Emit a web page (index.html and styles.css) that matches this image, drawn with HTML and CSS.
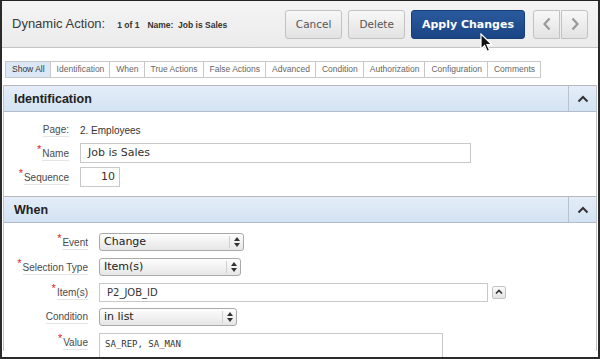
FILE: index.html
```html
<!DOCTYPE html>
<html lang="en">
<head>
  <meta charset="UTF-8">
  <title>Dynamic Action</title>
  <link rel="stylesheet" href="styles.css">
</head>
<body>

<div class="frame">
  <div class="topbar">
    <div class="title">
      <span class="title-main">Dynamic Action:</span>
      <span class="title-info">1 of 1</span>
      <span class="title-info">Name:&nbsp; Job is Sales</span>
    </div>
    <div class="actions">
      <button class="btn">Cancel</button>
      <button class="btn">Delete</button>
      <button class="btn btn-hot">Apply Changes</button>
      <div class="pager">
        <button class="btn btn-icon">
          <svg width="10" height="14" viewBox="0 0 10 14"><path d="M7.5 1.5 2.5 7l5 5.5" fill="none" stroke="#999" stroke-width="2.2"/></svg>
        </button>
        <button class="btn btn-icon">
          <svg width="10" height="14" viewBox="0 0 10 14"><path d="M2.5 1.5 7.5 7l-5 5.5" fill="none" stroke="#999" stroke-width="2.2"/></svg>
        </button>
      </div>
    </div>
  </div>

  <div class="content">
    <ul class="tabs">
      <li class="active">Show All</li>
      <li>Identification</li>
      <li>When</li>
      <li>True Actions</li>
      <li>False Actions</li>
      <li>Advanced</li>
      <li>Condition</li>
      <li>Authorization</li>
      <li>Configuration</li>
      <li>Comments</li>
    </ul>

    <div class="region">
      <div class="region-head">
        <h3>Identification</h3>
        <span class="collapse">
          <svg width="12" height="8" viewBox="0 0 12 8"><path d="M1.5 6.5 6 2l4.5 4.5" fill="none" stroke="#333" stroke-width="2"/></svg>
        </span>
      </div>
      <div class="region-body ident">
        <div class="label plain"><span>Page:</span></div>
        <div class="value">2. Employees</div>

        <div class="label"><i>*</i><span>Name</span></div>
        <div class="field"><div class="text name-input">Job is Sales</div></div>

        <div class="label"><i>*</i><span>Sequence</span></div>
        <div class="field"><div class="text seq-input">10</div></div>
      </div>
    </div>

    <div class="region">
      <div class="region-head">
        <h3>When</h3>
        <span class="collapse">
          <svg width="12" height="8" viewBox="0 0 12 8"><path d="M1.5 6.5 6 2l4.5 4.5" fill="none" stroke="#333" stroke-width="2"/></svg>
        </span>
      </div>
      <div class="region-body when">
        <div class="label"><i>*</i><span>Event</span></div>
        <div class="field"><div class="select event-sel">Change<span class="arrows"></span></div></div>

        <div class="label"><i>*</i><span>Selection Type</span></div>
        <div class="field"><div class="select type-sel">Item(s)<span class="arrows"></span></div></div>

        <div class="label"><i>*</i><span>Item(s)</span></div>
        <div class="field">
          <div class="text item-input">P2_JOB_ID</div>
          <span class="mini-btn">
            <svg width="8" height="6" viewBox="0 0 8 6"><path d="M1 4.5 4 1.5l3 3" fill="none" stroke="#333" stroke-width="1.6"/></svg>
          </span>
        </div>

        <div class="label plain"><span>Condition</span></div>
        <div class="field"><div class="select cond-sel">in list<span class="arrows"></span></div></div>

        <div class="label"><i>*</i><span>Value</span></div>
        <div class="field field-top"><div class="textarea">SA_REP, SA_MAN</div></div>
      </div>
    </div>
  </div>

  <svg class="cursor" width="14" height="20" viewBox="0 0 14 20">
    <path d="M1 1v15l3.6-3.4 2.6 5.8 2.4-1.1-2.6-5.6H12z" fill="#111" stroke="#fff" stroke-width="1.2"/>
  </svg>
</div>

</body>
</html>
```

FILE: styles.css
```css
* {
  box-sizing: border-box;
}

body {
  margin: 0;
  font-family: "Liberation Sans", Arial, sans-serif;
  background: #fff;
}

.frame {
  position: relative;
  width: 600px;
  height: 359px;
  overflow: hidden;
  border-top: 1px solid #222;
  border-left: 2px solid #2a2a2a;
  border-right: 2px solid #2a2a2a;
  border-bottom: 2px solid #2a2a2a;
  background: #fff;
}

/* top bar */
.topbar {
  height: 47px;
  display: flex;
  align-items: center;
  justify-content: space-between;
  padding: 0 10px 0 10px;
  background: linear-gradient(#f4f4f4, #ebebeb);
  border-bottom: 1px solid #c4c4c4;
}

.title {
  display: flex;
  align-items: baseline;
  gap: 8px;
  margin-top: -2px;
}

.title-main {
  font-size: 13px;
  color: #3a3a3a;
  margin-right: 4px;
}

.title-info {
  font-size: 8.5px;
  font-weight: bold;
  color: #333;
}

.actions {
  display: flex;
  align-items: center;
  gap: 6px;
}

.btn {
  height: 29px;
  padding: 0 10px;
  font-family: "DejaVu Sans", sans-serif;
  font-size: 10.5px;
  color: #555;
  background: linear-gradient(#f8f8f8, #e2e2e2);
  border: 1px solid #c2c2c2;
  border-radius: 3px;
}

.btn-hot {
  padding: 0 10px;
  font-weight: bold;
  font-size: 11px;
  color: #fff;
  background: linear-gradient(#2a5a9e, #1a4585);
  border-color: #163d75;
}

.pager {
  display: flex;
  gap: 1px;
  margin-left: 2px;
}

.btn-icon {
  width: 27px;
  padding: 0;
  display: flex;
  align-items: center;
  justify-content: center;
}

.btn-icon:first-child {
  border-radius: 3px 0 0 3px;
}

.btn-icon:last-child {
  border-radius: 0 3px 3px 0;
}

/* content */
.content {
  padding-top: 13px;
}

.tabs {
  list-style: none;
  margin: 0 0 7px 3px;
  padding: 0;
  display: flex;
}

.tabs li {
  height: 17px;
  line-height: 15px;
  padding: 0 5px 0 6px;
  font-size: 8.5px;
  color: #666;
  border: 1px solid #c8c8c8;
  border-left: none;
  background: #fff;
}

.tabs li:first-child {
  border-left: 1px solid #c8c8c8;
}

.tabs li.active {
  background: #dbe7f4;
  color: #333;
}

.region {
  border-left: 1px solid #c4c4c4;
  border-right: 1px solid #c4c4c4;
  margin: 0 1px 0 1px;
}

.region-head {
  height: 27px;
  display: flex;
  align-items: center;
  justify-content: space-between;
  background: linear-gradient(#e4edf8, #d3e3f3);
  border-top: 1px solid #b8b8b8;
  border-bottom: 1px solid #b3bcc6;
}

.region-head h3 {
  margin: 0 0 0 10px;
  font-size: 12.5px;
  font-weight: bold;
  color: #222;
}

.collapse {
  width: 28px;
  height: 100%;
  display: flex;
  align-items: center;
  justify-content: center;
  border-left: 1px solid #b8c2cc;
}

.region-body {
  display: grid;
  align-items: center;
  column-gap: 11px;
}

.ident {
  grid-template-columns: 65px 1fr;
  grid-template-rows: 18px 20px 20px;
  row-gap: 4px;
  padding: 9px 0 9px;
}

.when {
  grid-template-columns: 84px 1fr;
  grid-auto-rows: 18px;
  row-gap: 7px;
  padding: 10px 0 0;
}

.label {
  justify-self: end;
  display: flex;
  align-items: flex-start;
  font-size: 10px;
  color: #4a4a4a;
}

.label i {
  font-style: normal;
  color: #e02020;
  font-size: 11px;
  line-height: 8px;
  margin-right: 1px;
}

.label span {
  padding-top: 3px;
  border-bottom: 1px solid #e4e4e4;
  padding-bottom: 1px;
}

.label.plain span {
  padding-top: 0;
}

.value {
  font-size: 10px;
  color: #333;
}

.field {
  display: flex;
  align-items: center;
  gap: 4px;
}

.field-top {
  align-self: start;
}

.text {
  height: 20px;
  line-height: 18px;
  padding: 0 7px;
  font-family: "DejaVu Sans", sans-serif;
  font-size: 11px;
  color: #333;
  border: 1px solid #c9c9c9;
  background: #fff;
}

.name-input {
  width: 391px;
}

.seq-input {
  width: 40px;
  text-align: right;
  padding-right: 4px;
}

.item-input {
  width: 389px;
  height: 19px;
  line-height: 17px;
  font-size: 10px;
}

.mini-btn {
  width: 14px;
  height: 13px;
  display: flex;
  align-items: center;
  justify-content: center;
  border: 1px solid #c4c4c4;
  border-radius: 2px;
  background: linear-gradient(#fafafa, #e4e4e4);
}

.select {
  position: relative;
  height: 18px;
  line-height: 16px;
  padding: 0 4px;
  font-family: "DejaVu Sans", sans-serif;
  font-size: 11px;
  color: #222;
  border: 1px solid #a9a9a9;
  border-radius: 3px;
  background: linear-gradient(#fdfdfd, #e6e6e6);
}

.select .arrows {
  position: absolute;
  top: 2px;
  right: 0;
  width: 14px;
  height: 12px;
  border-left: 1px solid #d0d0d0;
}

.select .arrows::before,
.select .arrows::after {
  content: "";
  position: absolute;
  left: 4px;
  border-left: 3px solid transparent;
  border-right: 3px solid transparent;
}

.select .arrows::before {
  top: 1px;
  border-bottom: 4px solid #333;
}

.select .arrows::after {
  top: 7px;
  border-top: 4px solid #333;
}

.event-sel {
  width: 145px;
}

.type-sel {
  width: 142px;
}

.cond-sel {
  width: 138px;
}

.textarea {
  width: 344px;
  height: 30px;
  padding: 5px 5px;
  font-family: "DejaVu Sans Mono", monospace;
  font-size: 9px;
  color: #333;
  border: 1px solid #c9c9c9;
}

.cursor {
  position: absolute;
  left: 478px;
  top: 32px;
}
```
